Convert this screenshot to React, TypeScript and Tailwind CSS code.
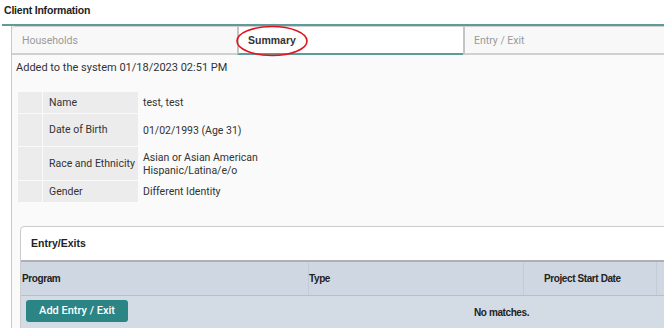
import React from 'react'

const rows = [
  { label: 'Name', value: ['test, test'], h: 'h-[21px]' },
  { label: 'Date of Birth', value: ['01/02/1993 (Age 31)'], h: 'h-[32px]' },
  { label: 'Race and Ethnicity', value: ['Asian or Asian American', 'Hispanic/Latina/e/o'], h: 'h-[33px]' },
  { label: 'Gender', value: ['Different Identity'], h: 'h-[21px]' },
]

export default function App() {
  return (
    <div className="relative h-[328px] w-[664px] overflow-hidden bg-white font-['Roboto',sans-serif] text-[#333]">
      <div className="flex h-[24px] items-center px-[4px] pb-[3px] font-['Liberation_Sans',sans-serif] text-[10.5px] font-bold tracking-[-0.2px] text-[#222]">
        Client Information
      </div>
      <div className="ml-[2px] h-[2px] bg-[#5e9c9c]" />

      <div className="pl-[11px]">
        <div className="h-[310px] border-l border-[#c8c8c8] bg-[#fafafa]">
          {/* tabs */}
          <div className="flex h-[29px] text-[10.5px]">
            <div className="flex w-[225px] items-center rounded-tl-[4px] border-t border-b-2 border-[#d0d0d0] bg-[#f8f8f8] pl-[10px] pt-[1px] text-[#9a9a9a]">
              Households
            </div>
            <div className="flex w-[226px] items-center border-b-2 border-l-2 border-t border-l-[#c4c4c4] border-t-[#d0d0d0] border-b-[#5e9c9c] bg-white pl-[9px] pt-[1px] font-['Liberation_Sans',sans-serif] font-bold text-[#333]">
              Summary
            </div>
            <div className="flex flex-1 items-center border-b-2 border-l-2 border-t border-l-[#c4c4c4] border-t-[#d0d0d0] border-b-[#d0d0d0] bg-[#f8f8f8] pl-[9px] pt-[1px] text-[#9a9a9a]">
              Entry / Exit
            </div>
          </div>

          <div className="pl-[4px] pt-[6px] text-[11px] leading-[13px]">Added to the system 01/18/2023 02:51 PM</div>

          {/* client summary table */}
          <div className="ml-[6px] mt-[18px] flex w-[260px] flex-col gap-[1px] text-[10.5px]">
            {rows.map((r) => (
              <div key={r.label} className={`flex ${r.h}`}>
                <div className="w-[24px] bg-[#ececec]" />
                <div className="ml-[1px] flex w-[95px] items-center bg-[#ececec] pl-[6px]">{r.label}</div>
                <div className="flex flex-1 flex-col justify-center pl-[5px] leading-[13px]">
                  {r.value.map((v) => (
                    <span key={v}>{v}</span>
                  ))}
                </div>
              </div>
            ))}
          </div>

          {/* entry / exits card */}
          <div className="ml-[8px] mt-[24px] w-[960px] rounded-tl-[4px] border border-[#cccccc] bg-white">
            <div className="flex h-[35px] items-center border-b-2 border-[#b0b0b0] pl-[10px] font-['Liberation_Sans',sans-serif] text-[10.5px] font-bold text-[#222]">
              Entry/Exits
            </div>
            <div className="flex h-[34px] border-b border-[#b8bfc7] bg-[#cfd8e2] font-['Liberation_Sans',sans-serif] text-[10px] font-bold tracking-[-0.4px] text-[#222]">
              <div className="flex w-[287px] items-center pl-[1px]">Program</div>
              <div className="flex w-[215px] items-center border-l border-[#c3ccd6]">Type</div>
              <div className="flex w-[133px] items-center border-l border-[#c3ccd6] pl-[20px]">Project Start Date</div>
              <div className="flex-1 border-l border-[#c3ccd6]" />
            </div>
            <div className="flex h-[34px] items-start bg-[#d3dce5] pl-[5px] pt-[4px]">
              <button className="h-[22px] w-[102px] rounded-[3px] bg-[#2b8585] font-['Roboto',sans-serif] text-[11px] font-medium text-white">
                Add Entry / Exit
              </button>
              <span className="ml-[346px] mt-[5px] font-['Liberation_Sans',sans-serif] text-[10px] font-bold tracking-[-0.4px] text-[#222]">
                No matches.
              </span>
            </div>
          </div>
        </div>
      </div>

      {/* hand-drawn red circle around the Summary tab */}
      <svg className="absolute left-[234px] top-[24px]" width="78" height="34" viewBox="0 0 78 34">
        <ellipse cx="38" cy="17" rx="35" ry="14.5" fill="none" stroke="#e0141c" strokeWidth="1.6" />
      </svg>
    </div>
  )
}
